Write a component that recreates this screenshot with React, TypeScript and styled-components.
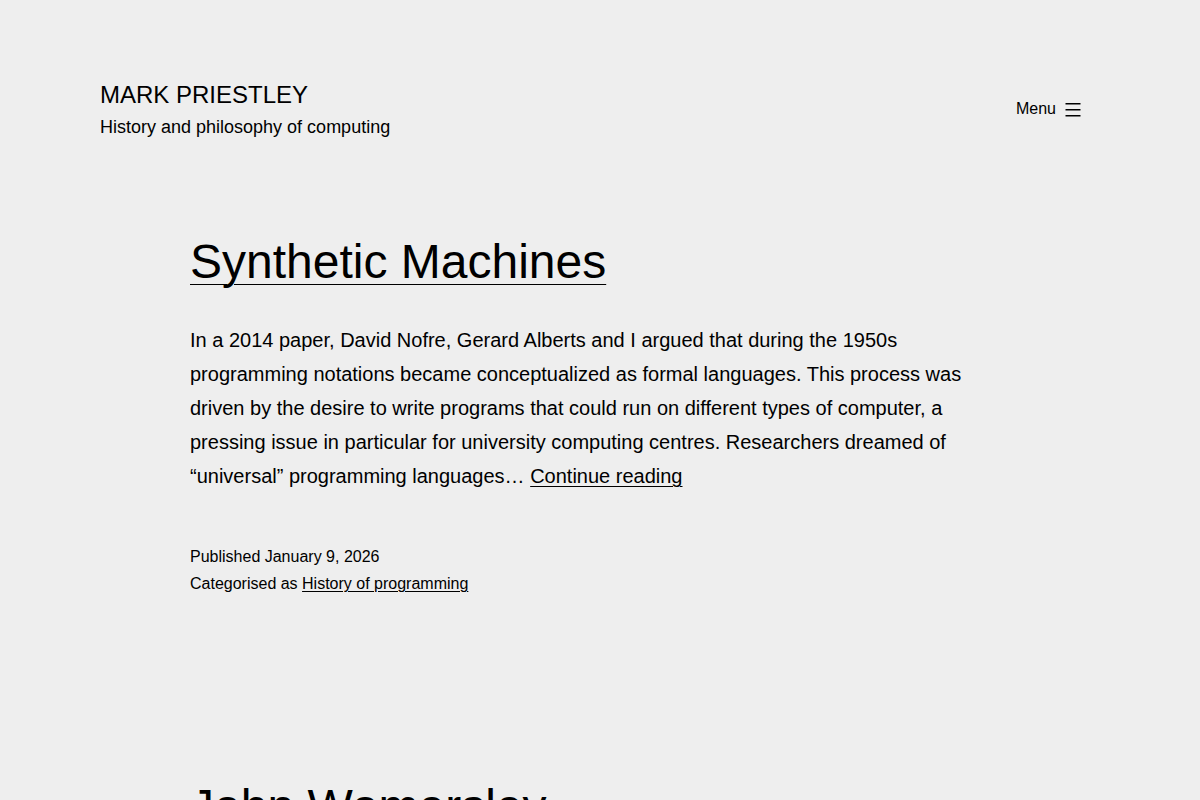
import React from "react";
import styled, { createGlobalStyle } from "styled-components";

const GlobalStyle = createGlobalStyle`
  html, body {
    margin: 0;
    padding: 0;
    background: #eeeeee;
  }
  body {
    font-family: "Liberation Sans", Arial, Helvetica, sans-serif;
    color: #000;
    -webkit-font-smoothing: antialiased;
  }
  * { box-sizing: border-box; }
`;

const Page = styled.div`
  height: 800px;
  overflow: hidden;
`;

const Header = styled.header`
  display: flex;
  align-items: center;
  justify-content: space-between;
  padding: 78px 100px 0 100px;
`;

const Branding = styled.div`
  display: flex;
  flex-direction: column;
`;

const SiteTitle = styled.p`
  margin: 0;
  font-size: 24px;
  line-height: 33.6px;
  text-transform: uppercase;
  letter-spacing: 0;
  font-weight: 400;
`;

const Tagline = styled.p`
  margin: 0;
  font-size: 18px;
  line-height: 30px;
`;

const MenuButton = styled.button`
  display: flex;
  align-items: center;
  gap: 5px;
  background: none;
  border: none;
  padding: 0;
  margin: 0 15px 2px 0;
  color: #000;
  font-family: inherit;
  font-size: 16px;
  line-height: 24px;
  cursor: pointer;
`;

const Main = styled.main`
  width: 820px;
  margin: 0 auto;
  padding-top: 89px;
`;

const Article = styled.article`
  margin-bottom: 179px;
`;

const EntryTitle = styled.h2`
  margin: 0;
  font-size: 48px;
  line-height: 62.4px;
  font-weight: 400;
  a {
    color: #000;
    text-decoration: underline 1px;
    text-underline-offset: 6px;
  }
`;

const Excerpt = styled.p`
  margin: 30px 0 0 0;
  font-size: 20px;
  line-height: 34px;
  a {
    color: #000;
    text-decoration: underline 1px;
    text-underline-offset: 3px;
  }
`;

const Footer = styled.footer`
  margin-top: 50px;
  font-size: 16px;
  line-height: 27.2px;
  a {
    color: #000;
    text-decoration: underline 1px;
    text-underline-offset: 2px;
  }
`;

const MetaLine = styled.div``;

const MenuIcon = () => (
  <svg width="24" height="24" viewBox="0 0 24 24" aria-hidden="true">
    <path
      fill="#000"
      fillRule="evenodd"
      d="M4.5 6H19.5V7.5H4.5V6ZM4.5 12H19.5V13.5H4.5V12ZM4.5 18H19.5V19.5H4.5V18Z"
    />
  </svg>
);

export default function App() {
  return (
    <Page>
      <GlobalStyle />
      <Header>
        <Branding>
          <SiteTitle>Mark Priestley</SiteTitle>
          <Tagline>History and philosophy of computing</Tagline>
        </Branding>
        <MenuButton>
          <span>Menu</span>
          <MenuIcon />
        </MenuButton>
      </Header>
      <Main>
        <Article>
          <EntryTitle>
            <a href="#">Synthetic Machines</a>
          </EntryTitle>
          <Excerpt>
            In a 2014 paper, David Nofre, Gerard Alberts and I argued that during the 1950s
            programming notations became conceptualized as formal languages. This process was
            driven by the desire to write programs that could run on different types of
            computer, a pressing issue in particular for university computing centres.
            Researchers dreamed of “universal” programming languages… <a href="#">Continue reading</a>
          </Excerpt>
          <Footer>
            <MetaLine>Published January 9, 2026</MetaLine>
            <MetaLine>
              Categorised as <a href="#">History of programming</a>
            </MetaLine>
          </Footer>
        </Article>
        <Article>
          <EntryTitle>
            <a href="#">John Womersley</a>
          </EntryTitle>
        </Article>
      </Main>
    </Page>
  );
}
